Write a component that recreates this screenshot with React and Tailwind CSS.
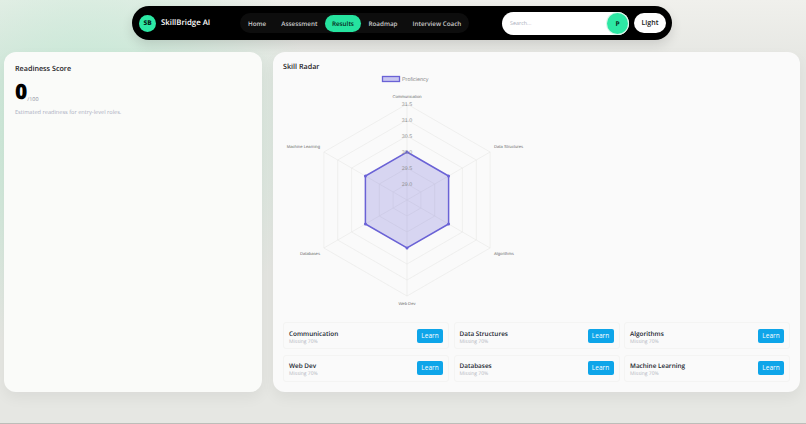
import React from 'react';

const navItems = ['Home', 'Assessment', 'Results', 'Roadmap', 'Interview Coach'];
const gaps = ['Communication', 'Data Structures', 'Algorithms', 'Web Dev', 'Databases', 'Machine Learning'];

const CX = 124;
const CY = 128;

const hexPoints = (r) =>
  [0, 1, 2, 3, 4, 5]
    .map((i) => {
      const a = (Math.PI / 3) * i - Math.PI / 2;
      return `${(CX + r * Math.cos(a)).toFixed(1)},${(CY + r * Math.sin(a)).toFixed(1)}`;
    })
    .join(' ');

const vertex = (r, i) => {
  const a = (Math.PI / 3) * i - Math.PI / 2;
  return [CX + r * Math.cos(a), CY + r * Math.sin(a)];
};

const RadarChart = () => {
  const rings = [16, 32, 48, 64, 80, 96];
  const ticks = [
    ['29.0', 112],
    ['29.5', 96],
    ['30.0', 80],
    ['30.5', 64],
    ['31.0', 48],
    ['31.5', 32],
  ];
  const labels = [
    ['Communication', 124, 26, 'middle'],
    ['Data Structures', 211, 76, 'start'],
    ['Algorithms', 211, 183, 'start'],
    ['Web Dev', 124, 233, 'middle'],
    ['Databases', 37, 183, 'end'],
    ['Machine Learning', 37, 76, 'end'],
  ];
  return (
    <svg width="507" height="243" viewBox="0 0 507 243" className="block" style={{ fontFamily: '"Liberation Sans", Arial, sans-serif' }}>
      <rect x="99.5" y="4.5" width="17" height="5" fill="#c9c7f0" stroke="#6a62d6" strokeWidth="1.3" />
      <text x="119" y="9" fontSize="5.4" fill="#8a8a8a">Proficiency</text>
      {rings.map((r) => (
        <polygon key={r} points={hexPoints(r)} fill="none" stroke="#e7e7e5" strokeWidth="0.6" />
      ))}
      {[0, 1, 2, 3, 4, 5].map((i) => {
        const [x, y] = vertex(96, i);
        return <line key={i} x1={CX} y1={CY} x2={x} y2={y} stroke="#e7e7e5" strokeWidth="0.6" />;
      })}
      <polygon points={hexPoints(48)} fill="#6a62d6" fillOpacity="0.24" stroke="#6a62d6" strokeWidth="1.5" />
      {[0, 1, 2, 3, 4, 5].map((i) => {
        const [x, y] = vertex(48, i);
        return <circle key={i} cx={x} cy={y} r="1.5" fill="#6a62d6" />;
      })}
      {ticks.map(([t, y]) => (
        <text key={t} x={CX} y={y + 2} fontSize="5.3" fill="#8f8f8f" textAnchor="middle">{t}</text>
      ))}
      {labels.map(([t, x, y, anchor]) => (
        <text key={t} x={x} y={y} fontSize="4.2" fill="#6f6f6f" textAnchor={anchor}>{t}</text>
      ))}
    </svg>
  );
};

const App = () => {
  return (
    <div className="relative h-[424px] w-[806px] overflow-hidden border-b border-[#bdbdb9] bg-[#e6e7e3] font-['Open_Sans','Noto_Sans',sans-serif] antialiased opacity-[0.999] [text-rendering:geometricPrecision]">
      <div className="absolute inset-x-0 top-0 h-[60px] bg-[linear-gradient(#f0f0ec,#f0f0ec00)]" />
      <div className="absolute left-[-140px] top-[-100px] h-[460px] w-[460px] rounded-full bg-[radial-gradient(circle,#bfe9d3_0%,#e6e7e300_70%)]" />
      <div className="relative">
        <div className="flex justify-center pr-[2px] pt-[6px]">
          <header className="flex h-[34px] w-[540px] items-center rounded-full bg-black pl-[7px] pr-[6px] shadow-[0_5px_12px_rgba(0,0,0,0.12)]">
            <div className="flex h-[17px] w-[17px] items-center justify-center rounded-full bg-[#2de8a4] text-[6.5px] font-extrabold text-[#06281c]">SB</div>
            <span className="ml-[5px] w-[66px] pt-[2px] text-[7.8px] font-semibold text-white">SkillBridge AI</span>
            <nav className="ml-[13px] flex h-[20px] items-center rounded-full bg-[#0d0d0d] px-[0.5px]">
              {navItems.map((item) => (
                <span
                  key={item}
                  className={
                    item === 'Results'
                      ? 'flex h-[17px] items-center rounded-full bg-[#26e39f] px-[7px] pt-[1px] text-[6.3px] font-semibold text-[#07291d]'
                      : 'flex h-[17px] items-center px-[7.5px] pt-[1px] text-[6.3px] font-semibold text-[#c9c9c9]'
                  }
                >
                  {item}
                </span>
              ))}
            </nav>
            <div className="ml-auto flex h-[23px] w-[127px] items-center justify-between rounded-full bg-white pl-[8px] pr-[1px]">
              <span className="text-[5.4px] text-[#a9adba]">Search...</span>
              <span className="flex h-[21px] w-[21px] items-center justify-center rounded-full bg-[#2de8a4] pt-[1px] text-[6.5px] font-bold text-[#07291d] shadow-[0_0_0_1px_#d9f5ea]">P</span>
            </div>
            <button className="ml-[5px] flex h-[20px] w-[32px] items-center justify-center rounded-full bg-white pt-[1px] text-[7px] font-semibold text-[#1b1b1b]">Light</button>
          </header>
        </div>

        <main className="mt-[12px] flex gap-[11px] pl-[4px] pr-[6px]">
          <section className="h-[340px] w-[258px] rounded-[12px] bg-[#fafbf9] px-[11px] pt-[12px] shadow-[0_6px_14px_rgba(0,0,0,0.05)]">
            <h2 className="text-[7.2px] font-semibold leading-[10px] text-[#1f2328]">Readiness Score</h2>
            <div className="mt-[6px] flex items-end">
              <span className="text-[21px] font-extrabold leading-[24px] text-black">0</span>
              <span className="mb-[1px] text-[5.4px] text-[#8b90a0]">/100</span>
            </div>
            <p className="mt-[4px] text-[5.6px] text-[#a9adc0]">Estimated readiness for entry-level roles.</p>
          </section>

          <section className="h-[340px] flex-1 rounded-[12px] bg-[#fafafa] px-[10px] pt-[10px] shadow-[0_6px_14px_rgba(0,0,0,0.05)]">
            <h2 className="pt-[1px] text-[7.2px] font-semibold leading-[9px] text-[#1f2328]">Skill Radar</h2>
            <RadarChart />
            <div className="mt-[7px] grid grid-cols-3 gap-x-[4.5px] gap-y-[5.5px]">
              {gaps.map((skill) => (
                <div key={skill} className="flex h-[27px] items-center justify-between rounded-[3px] border border-[#f4f4f3] pl-[5px] pr-[5px]">
                  <div className="pt-[3px]">
                    <p className="text-[6.4px] font-semibold leading-[10px] text-[#20242e]">{skill}</p>
                    <p className="text-[5px] leading-[7px] text-[#b3b6c0]">Missing 70%</p>
                  </div>
                  <button className="h-[14px] w-[26px] rounded-[2px] bg-[#0ea5e9] text-[6.5px] font-medium text-white">Learn</button>
                </div>
              ))}
            </div>
          </section>
        </main>
      </div>
    </div>
  );
};

export default App;
